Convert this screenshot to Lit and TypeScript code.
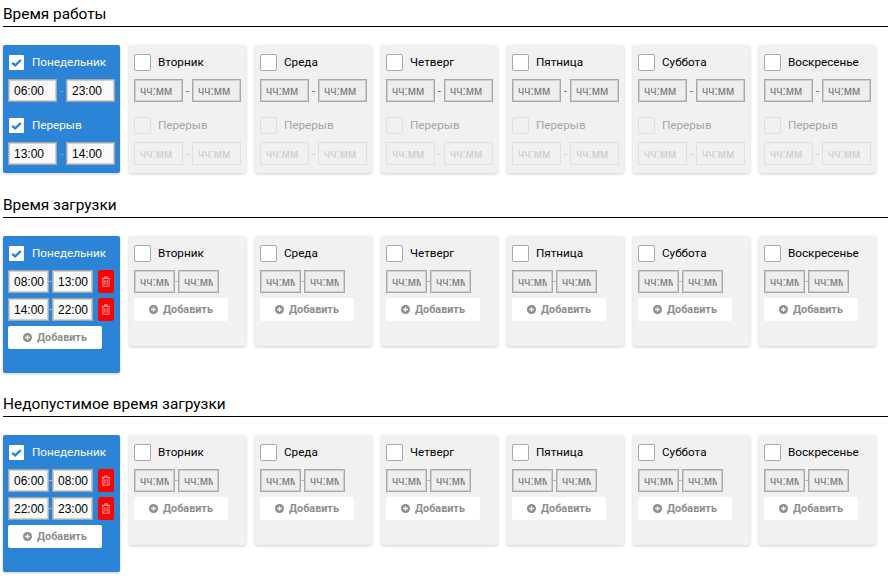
import { LitElement, html, css, svg } from 'lit';
import { customElement } from 'lit/decorators.js';

const DAYS = ['Понедельник', 'Вторник', 'Среда', 'Четверг', 'Пятница', 'Суббота', 'Воскресенье'];

const check = svg`<path d="M3.2 7.8 6.2 10.4 11.8 5" fill="none" stroke="#2b84d6" stroke-width="2.4"/>`;

@customElement('app-root')
export class AppRoot extends LitElement {
  static styles = css`
    :host {
      display: block;
      padding: 0 0 0 3px;
      font-family: Roboto, sans-serif;
      color: #000;
      opacity: 0.999;
    }
    h2 {
      margin: 0 0 18px;
      height: 27px;
      box-sizing: border-box;
      border-bottom: 1px solid #000;
      font-size: 15.4px;
      font-weight: 400;
      line-height: 28px;
      white-space: nowrap;
    }
    .days {
      display: flex;
      align-items: flex-start;
      gap: 9px;
      margin-bottom: 18px;
    }
    .days.tall {
      margin-bottom: 17px;
    }
    .card {
      box-sizing: border-box;
      width: 117px;
      padding: 9px 5px 0;
      background: #f1f1f1;
      border-radius: 2px;
      box-shadow: 0 1px 3px rgba(0, 0, 0, 0.2);
    }
    .card.on {
      background: #2b84d6;
      color: #fff;
    }
    .fixed {
      height: 128px;
    }
    .ranges {
      height: 110px;
    }
    .ranges.on {
      height: 137px;
    }
    .check {
      display: flex;
      align-items: center;
      gap: 7px;
      height: 17px;
      font-size: 11.7px;
      white-space: nowrap;
    }
    .check .label {
      margin-bottom: 2px;
    }
    .box {
      box-sizing: border-box;
      width: 17px;
      height: 17px;
      flex: none;
      background: #fff;
      border: 1px solid #a9a9a9;
      border-radius: 2px;
    }
    .on .box {
      border-color: #2b84d6;
    }
    .box svg {
      display: block;
      width: 15px;
      height: 15px;
    }
    .check.off {
      color: #a5a5a5;
    }
    .check.off .box {
      background: #f1f1f1;
      border-color: #dedede;
    }
    .times {
      display: flex;
      align-items: center;
      margin-top: 8px;
    }
    .sep {
      width: 9px;
      text-align: center;
      font-size: 12px;
      color: #777;
    }
    .on .sep {
      color: #8aa9a0;
    }
    input {
      box-sizing: border-box;
      width: 49px;
      height: 23px;
      min-width: 0;
      margin: 0;
      padding: 0 4px 0 5px;
      border: 1px solid #a8a8a8;
      border-radius: 0;
      box-shadow: inset 0 0 0 1px #cfcfcf;
      background: #eee;
      font-family: 'Liberation Sans', sans-serif;
      font-size: 12px;
      color: #000;
      outline: none;
    }
    input:placeholder-shown {
      padding-right: 5px;
    }
    input::placeholder {
      color: #777;
      opacity: 1;
    }
    .on input {
      background: #f9f9f9;
    }
    .times.off input {
      background: #f1f1f1;
      border-color: #e0e0e0;
      box-shadow: none;
    }
    .times.off input::placeholder {
      color: #cacaca;
    }
    .times.off .sep {
      color: #cacaca;
    }
    .break {
      margin-top: 15px;
    }
    .row {
      margin-top: 5px;
    }
    .check + .row {
      margin-top: 8px;
    }
    .row input {
      width: 41px;
    }
    .row .sep {
      width: 3px;
      height: 1px;
      background: #b4b4b4;
    }
    .del {
      display: flex;
      align-items: center;
      justify-content: center;
      width: 16px;
      height: 23px;
      margin-left: 5px;
      background: #f00;
      border-radius: 2px;
    }
    .del svg {
      width: 8px;
      height: 11px;
      opacity: 0.7;
    }
    .add {
      display: flex;
      align-items: center;
      justify-content: center;
      gap: 5px;
      box-sizing: border-box;
      width: 94px;
      height: 23px;
      margin-top: 5px;
      background: #fff;
      border-radius: 2px;
      color: #8e8e8e;
      font-size: 10.8px;
      font-weight: 700;
    }
    .add svg {
      width: 9px;
      height: 9px;
    }
  `;

  private checkbox(label: string, checked: boolean, off = false) {
    return html`<div class="check ${off ? 'off' : ''}">
      <span class="box">${checked ? html`<svg viewBox="0 0 15 15">${check}</svg>` : ''}</span>
      <span class="label">${label}</span>
    </div>`;
  }

  private times(from: string, to: string, off = false) {
    return html`<div class="times ${off ? 'off' : ''}">
      <input .value=${from} placeholder="чч:мм" />
      <span class="sep">-</span>
      <input .value=${to} placeholder="чч:мм" />
    </div>`;
  }

  private fixedCard(day: string, i: number) {
    const on = i === 0;
    return html`<div class="card fixed ${on ? 'on' : ''}">
      ${this.checkbox(day, on)}
      ${this.times(on ? '06:00' : '', on ? '23:00' : '')}
      <div class="break">${this.checkbox('Перерыв', on, !on)}</div>
      ${this.times(on ? '13:00' : '', on ? '14:00' : '', !on)}
    </div>`;
  }

  private rangeRow(from: string, to: string, removable: boolean) {
    return html`<div class="times row">
      <input .value=${from} placeholder="чч:мм" />
      <span class="sep"></span>
      <input .value=${to} placeholder="чч:мм" />
      ${removable
        ? html`<span class="del">
            <svg viewBox="0 0 9 12" fill="none" stroke="#fff" stroke-width="1">
              <path d="M0 2.5h9M3 2.5V.7h3v1.8M1 2.5v8.8h7V2.5M3.2 4.5v5M5.8 4.5v5" />
            </svg>
          </span>`
        : ''}
    </div>`;
  }

  private rangeCard(day: string, i: number, ranges: string[][]) {
    const on = i === 0;
    const rows = on ? ranges : [['', '']];
    return html`<div class="card ranges ${on ? 'on' : ''}">
      ${this.checkbox(day, on)}
      ${rows.map(([from, to]) => this.rangeRow(from, to, on))}
      <div class="add">
        <svg viewBox="0 0 10 10">
          <circle cx="5" cy="5" r="5" fill="#8e8e8e" />
          <path d="M5 2.4v5.2M2.4 5h5.2" stroke="#fff" stroke-width="1.4" />
        </svg>
        Добавить
      </div>
    </div>`;
  }

  render() {
    return html`
      <section>
        <h2>Время работы</h2>
        <div class="days">${DAYS.map((d, i) => this.fixedCard(d, i))}</div>
      </section>
      <section>
        <h2>Время загрузки</h2>
        <div class="days tall">
          ${DAYS.map((d, i) => this.rangeCard(d, i, [['08:00', '13:00'], ['14:00', '22:00']]))}
        </div>
      </section>
      <section>
        <h2>Недопустимое время загрузки</h2>
        <div class="days tall">
          ${DAYS.map((d, i) => this.rangeCard(d, i, [['06:00', '08:00'], ['22:00', '23:00']]))}
        </div>
      </section>
    `;
  }
}
